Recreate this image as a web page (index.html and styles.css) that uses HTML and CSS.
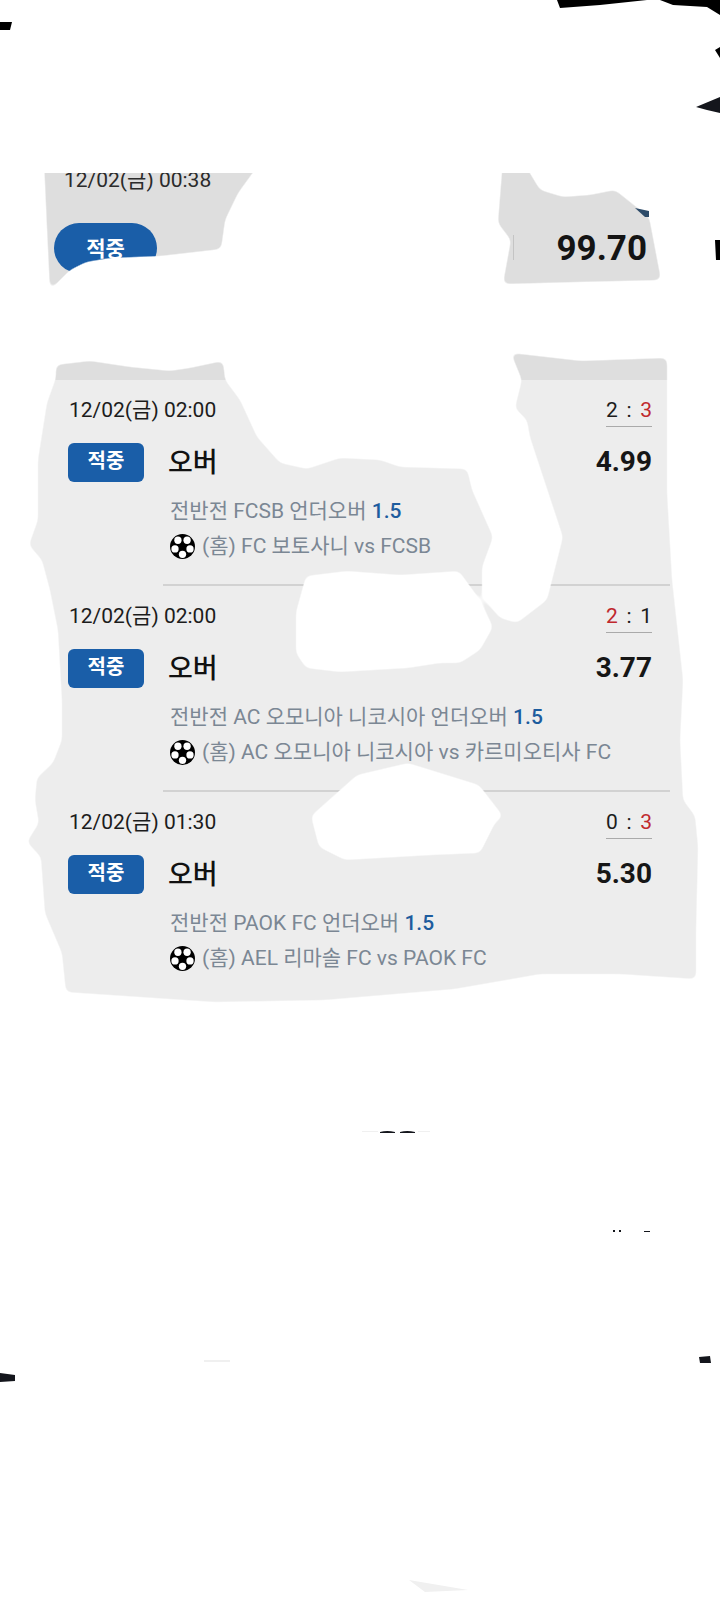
FILE: index.html
```html
<!DOCTYPE html>
<html lang="ko">
<head>
    <meta charset="UTF-8">
    <meta name="viewport" content="width=device-width, initial-scale=1.0">
    <title>적중 내역</title>
    <link rel="stylesheet" href="styles.css">
</head>
<body>
    <svg class="defs" width="0" height="0">
        <symbol id="ball" viewBox="0 0 24 24">
            <circle cx="12" cy="12" r="12" fill="#000"/>
            <circle cx="7.600" cy="6" r="3.500" fill="#fff"/>
            <circle cx="16.400" cy="6" r="3.500" fill="#fff"/>
            <circle cx="4.800" cy="14.300" r="3.500" fill="#fff"/>
            <circle cx="19.200" cy="14.300" r="3.500" fill="#fff"/>
            <circle cx="12" cy="19.500" r="3.500" fill="#fff"/>
        </symbol>
        <filter id="soft" x="-5%" y="-5%" width="110%" height="110%">
            <feGaussianBlur stdDeviation="3"/>
            <feComponentTransfer>
                <feFuncA type="linear" slope="6" intercept="-2.500"/>
            </feComponentTransfer>
        </filter>
    </svg>

    <section class="summary">
        <div class="summary-date">12/02(금) 00:38</div>
        <div class="summary-body">
            <span class="pill">적중</span>
            <span class="total">99.70</span>
        </div>
    </section>

    <section class="list">
        <div class="row">
            <div class="row-head">
                <span class="date">12/02(금) 02:00</span>
                <span class="score">2 <i>:</i> <b>3</b></span>
            </div>
            <div class="row-main">
                <span class="badge">적중</span>
                <span class="pick">오버</span>
                <span class="odds">4.99</span>
            </div>
            <div class="market">전반전 FCSB 언더오버 <b>1.5</b></div>
            <div class="teams"><svg class="ball"><use href="#ball"/></svg>(홈) FC 보토사니 vs FCSB</div>
        </div>
        <div class="divider"></div>
        <div class="row">
            <div class="row-head">
                <span class="date">12/02(금) 02:00</span>
                <span class="score"><b>2</b> <i>:</i> 1</span>
            </div>
            <div class="row-main">
                <span class="badge">적중</span>
                <span class="pick">오버</span>
                <span class="odds">3.77</span>
            </div>
            <div class="market">전반전 AC 오모니아 니코시아 언더오버 <b>1.5</b></div>
            <div class="teams"><svg class="ball"><use href="#ball"/></svg>(홈) AC 오모니아 니코시아 vs 카르미오티사 FC</div>
        </div>
        <div class="divider"></div>
        <div class="row">
            <div class="row-head">
                <span class="date">12/02(금) 01:30</span>
                <span class="score">0 <i>:</i> <b>3</b></span>
            </div>
            <div class="row-main">
                <span class="badge">적중</span>
                <span class="pick">오버</span>
                <span class="odds">5.30</span>
            </div>
            <div class="market">전반전 PAOK FC 언더오버 <b>1.5</b></div>
            <div class="teams"><svg class="ball"><use href="#ball"/></svg>(홈) AEL 리마솔 FC vs PAOK FC</div>
        </div>
    </section>

    <!-- white paint-over that hides most of the screenshot, plus the bits left showing -->
    <svg class="paint" viewBox="0 0 720 1600" width="720" height="1600">
        <path class="paint-white" filter="url(#soft)" fill-rule="evenodd" d="M-60 -60H780V1660H-60Z
            M44 160H262L238 193L225 220L221 249L160 256L110 258L86 262L70 270L50 290L47 227Z
            M503 160H522L540 190L563 197L590 195L615 190L635 206L649 217L661 280L576 282L503 284L511 240L498 223Z
            M56 365L90 361L130 367L170 371L190 368L223 361L225 380L240 400L257 437L280 463L307 469L340 458L380 460L400 467L467 469L472 490L493 537L482 567L482 597L500 618L517 623L547 600L563 537L530 437L527 420L515 408L522 380L511 353L581 361L667 358L667 380L667 493L672 580L683 680L680 740L683 800L695 816L698 847L696 930L696 979L620 974L540 974L454 989L324 1000L215 1002L66 992L62 953L45 913L41 857L27 842L39 823L35 800L37 778L53 763L62 740L62 700L58 630L50 590L42 560L29 545L38 520L38 460L47 403L56 378Z
            M306 576L347 571L400 575L459 571L480 600L493 627L480 650L460 663L440 663L408 668L340 672L306 668L296 653L296 612Z
            M311 816L357 775L408 763L479 785L503 816L495 823L480 853L432 855L345 860L319 847Z"/>
        <rect class="paint-white" x="0" y="120" width="720" height="53"/>
        <path class="paint-black" d="M557 0H647L600 5L560 8ZM660 0H720V15L707 7L673 5ZM715 50L720 47V58ZM715 240H720V260H716ZM0 22H12L10 30H0Z"/>
        <path class="paint-dark" d="M696 107L720 97V113L707 110ZM699 1357L710 1356L711 1363L700 1363ZM0 1373L15 1375V1381L0 1382Z"/>
        <path class="paint-navy" d="M635 208L649 211V217L645 217Z"/>
        <path class="paint-dark" d="M380 1132Q387 1130 395 1132V1133H380ZM400 1132Q407 1130 415 1132V1133H400ZM613 1230H615V1232H613ZM619 1230H621V1232H619ZM644 1231H650V1232H644Z"/>
        <path class="paint-faint" d="M362 1131H378V1132H362ZM418 1131H430V1132H418ZM204 1360H230V1362H204ZM409 1580L468 1590L425 1592Z"/>
        <path class="paint-line" d="M513 235H514V260H513Z"/>
    </svg>
</body>
</html>
```

FILE: styles.css
```css
body {
    margin: 0;
    width: 720px;
    height: 1600px;
    position: relative;
    overflow: hidden;
    background-color: #fff;
    color: #1c1c1c;
    font-family: Roboto, "Noto Sans CJK KR", sans-serif;
}

.defs {
    display: block;
}

/* top summary card */
.summary {
    margin-top: 150px;
    height: 230px;
    padding: 18px 73px 0 54px;
    box-sizing: border-box;
    background-color: #dedede;
}

.summary-date {
    margin-left: 10px;
    font-size: 21px;
    line-height: 24px;
    color: #2b2b2b;
}

.summary-body {
    display: flex;
    justify-content: space-between;
    align-items: center;
    margin-top: 31px;
}

.pill {
    width: 103px;
    height: 50px;
    border-radius: 25px;
    background-color: #1a5ea8;
    color: #fff;
    font-size: 21px;
    font-weight: 700;
    line-height: 52px;
    text-align: center;
}

.total {
    font-size: 35px;
    font-weight: 700;
    color: #141414;
}

/* hit list */
.list {
    height: 640px;
    background-color: #ededed;
}

.row {
    padding: 17px 68px 20px 69px;
}

.row-head {
    display: flex;
    justify-content: space-between;
    align-items: flex-start;
    line-height: 26px;
}

.date {
    font-size: 21px;
    line-height: 26px;
}

.score {
    display: flex;
    justify-content: space-between;
    width: 46px;
    padding-bottom: 3px;
    border-bottom: 1px solid #aaa;
    font-size: 21px;
    line-height: 26px;
}

.score b {
    font-weight: 400;
    color: #c0282d;
}

.score i {
    font-style: normal;
}

.row-main {
    display: flex;
    align-items: center;
    margin: 16px 0 0 -1px;
    height: 39px;
}

.badge {
    width: 76px;
    height: 39px;
    border-radius: 6px;
    background-color: #1a5ea8;
    color: #fff;
    font-size: 20px;
    font-weight: 700;
    line-height: 36px;
    text-align: center;
}

.pick {
    margin: -4px 0 0 24px;
    font-size: 27px;
    font-weight: 500;
    color: #111;
}

.odds {
    margin: -2px 0 0 auto;
    font-size: 28px;
    font-weight: 700;
    color: #161616;
}

.market,
.teams {
    height: 35px;
    padding-left: 101px;
    font-size: 21px;
    line-height: 35px;
    color: #7b8794;
}

.market {
    margin-top: 12px;
}

.market b {
    font-weight: 500;
    color: #1d5c9e;
}

.teams {
    display: flex;
    align-items: center;
    gap: 7px;
}

.ball {
    width: 25px;
    height: 25px;
    flex-shrink: 0;
}

.divider {
    height: 2px;
    margin: 0 50px 0 163px;
    background-color: #d2d2d2;
}

/* paint-over layer */
.paint {
    position: absolute;
    top: 0;
    left: 0;
}

.paint-white {
    fill: #fff;
}

.paint-black {
    fill: #000;
}

.paint-dark {
    fill: #14161c;
}

.paint-navy {
    fill: #2c4a68;
}

.paint-faint {
    fill: #f0f0f0;
}

.paint-line {
    fill: #c4c4c4;
}
```
